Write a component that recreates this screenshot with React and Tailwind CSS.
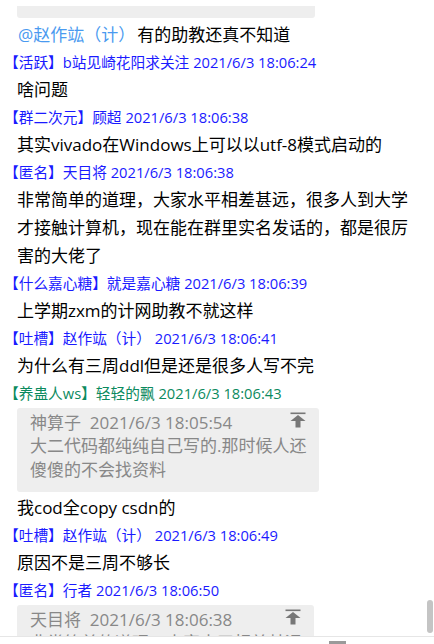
import React from "react";

const FONT = { fontFamily: '"Open Sans", "Noto Sans CJK SC", sans-serif' };

function Header({ tag, name, time, green }) {
  return (
    <div
      className={`pl-[4px] h-[27px] text-[14.7px] leading-[27px] whitespace-nowrap ${
        green ? "text-[#0b8a5e]" : "text-[#1a1aff]"
      }`}
    >
      【{tag}】{name} {time}
    </div>
  );
}

function Body({ lines }) {
  return (
    <div className="pl-[17px] text-[17px] leading-[28px] text-black">
      {lines.map((l, i) => (
        <div key={i} className="whitespace-nowrap">
          {l}
        </div>
      ))}
    </div>
  );
}

function TopIcon() {
  return (
    <svg width="16" height="16" viewBox="0 0 16 16" className="absolute right-[13px] top-[4px]">
      <rect x="0.5" y="0.5" width="15" height="1.6" fill="#777" />
      <polygon points="8,3 15.5,9 0.5,9" fill="#777" />
      <rect x="5.5" y="8.5" width="5" height="7" fill="#777" />
    </svg>
  );
}

function Quote({ name, time, lines, width }) {
  return (
    <div
      className="relative ml-[17px] mt-[1px] rounded-[3px] bg-[#eeeeee] pl-[13px] pt-[4px] pb-[10px] text-[#888888] text-[17px]"
      style={{ width }}
    >
      <TopIcon />
      <div className="h-[22px] leading-[22px] whitespace-nowrap">
        {name}&nbsp;&nbsp;{time}
      </div>
      {lines.map((l, i) => (
        <div key={i} className="leading-[24px] whitespace-nowrap">
          {l}
        </div>
      ))}
    </div>
  );
}

export default function App() {
  return (
    <div className="w-[434px] h-[644px] bg-white overflow-hidden flex flex-col" style={FONT}>
      <div className="relative h-[636px] overflow-hidden">
        <div className="pt-[6px]">
          <div className="ml-[17px] w-[298px] h-[12px] bg-[#eeeeee] rounded-b-[3px]" />
          <div className="mt-[3px] pl-[18px] h-[28px] text-[17px] leading-[28px] whitespace-nowrap flex">
            <span className="text-[#4a9af0]">@赵作竑（计）</span>
            <span className="ml-[2px] text-black">有的助教还真不知道</span>
          </div>
          <Header tag="活跃" name="b站见崎花阳求关注" time="2021/6/3 18:06:24" />
          <Body lines={["啥问题"]} />
          <Header tag="群二次元" name="顾超" time="2021/6/3 18:06:38" />
          <Body lines={["其实vivado在Windows上可以以utf-8模式启动的"]} />
          <Header tag="匿名" name="天目将" time="2021/6/3 18:06:38" />
          <Body
            lines={[
              "非常简单的道理，大家水平相差甚远，很多人到大学",
              "才接触计算机，现在能在群里实名发话的，都是很厉",
              "害的大佬了",
            ]}
          />
          <Header tag="什么嘉心糖" name="就是嘉心糖" time="2021/6/3 18:06:39" />
          <Body lines={["上学期zxm的计网助教不就这样"]} />
          <Header tag="吐槽" name="赵作竑（计）" time="2021/6/3 18:06:41" />
          <Body lines={["为什么有三周ddl但是还是很多人写不完"]} />
          <Header tag="养蛊人ws" name="轻轻的飘" time="2021/6/3 18:06:43" green />
          <Quote
            name="神算子"
            time="2021/6/3 18:05:54"
            width={302}
            lines={["大二代码都纯纯自己写的.那时候人还", "傻傻的不会找资料"]}
          />
          <div className="mt-[2px]">
            <Body lines={["我cod全copy csdn的"]} />
          </div>
          <Header tag="吐槽" name="赵作竑（计）" time="2021/6/3 18:06:49" />
          <Body lines={["原因不是三周不够长"]} />
          <Header tag="匿名" name="行者" time="2021/6/3 18:06:50" />
          <Quote
            name="天目将"
            time="2021/6/3 18:06:38"
            width={297}
            lines={["非常简单的道理，大家水平相差甚远", "很多人到大学才接触计算机"]}
          />
        </div>
        <div className="absolute right-[1px] top-[600px] w-[6px] h-[33px] rounded-[3px] bg-[#c4c4c4]" />
      </div>
      <div className="relative flex-1 border-t border-[#e6e6e6]">
        <div className="absolute left-[329px] top-[4px] w-[17px] h-[4px] bg-[#9a9a9a]" />
      </div>
    </div>
  );
}
